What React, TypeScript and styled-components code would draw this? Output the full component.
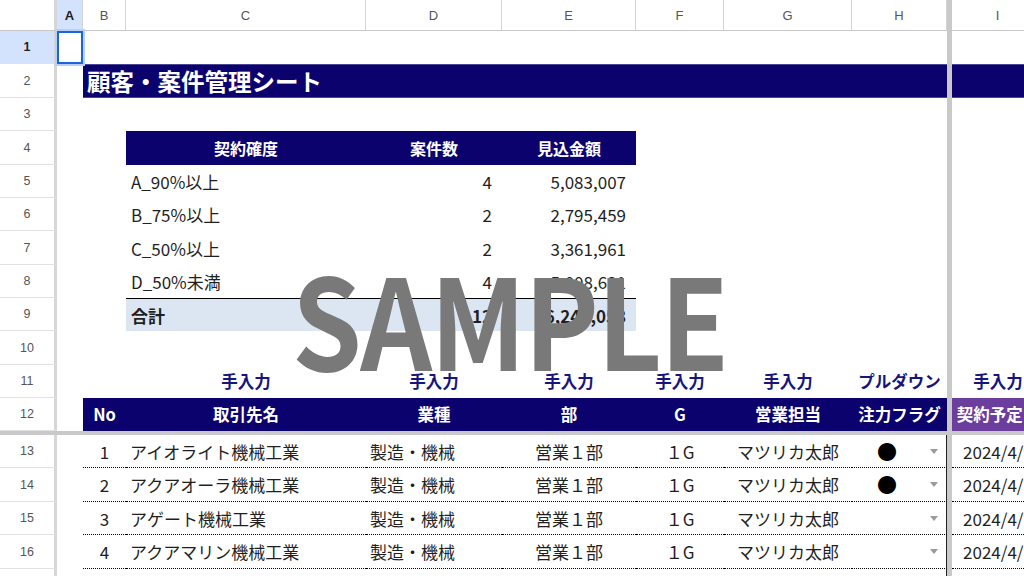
import styled, { createGlobalStyle } from 'styled-components'

const GlobalStyle = createGlobalStyle`
  html, body {
    margin: 0;
    padding: 0;
    background: #fff;
    overflow: hidden;
  }
`

const JP = `"Noto Sans CJK JP", "Noto Sans", sans-serif`
const NAVY = '#0b026e'
const PURPLE = '#6b3d9c'
const BAR = '#c9c9c9'

const Sheet = styled.div`
  position: relative;
  width: 1024px;
  height: 576px;
  overflow: hidden;
  font-family: ${JP};
  color: #1f1f1f;
`

// row header | A | B | C | D | E | F | G | H | freeze | I | J...
const Row = styled.div<{ $h: number }>`
  display: grid;
  grid-template-columns: 57px 26px 43px 240px 136px 134px 88px 128px 95px 5px 92px 1fr;
  height: ${p => p.$h}px;
`

const Corner = styled.div`
  border-right: 3px solid #d6d6d6;
  border-bottom: 1px solid #c7c7c7;
`

const ColHead = styled.div<{ $active?: boolean }>`
  display: flex;
  align-items: center;
  justify-content: center;
  border-right: 1px solid #d4d4d4;
  border-bottom: 1px solid #c7c7c7;
  font-family: "Liberation Sans", Arial, sans-serif;
  font-size: 13px;
  color: ${p => (p.$active ? '#1f1f1f' : '#555')};
  font-weight: ${p => (p.$active ? 700 : 400)};
  background: ${p => (p.$active ? '#d3e3fd' : '#fff')};
`

const RowHead = styled.div<{ $active?: boolean }>`
  display: flex;
  align-items: center;
  justify-content: center;
  border-right: 3px solid #d6d6d6;
  border-bottom: 1px solid #e1e1e1;
  font-family: "Liberation Sans", Arial, sans-serif;
  font-size: 12.5px;
  color: ${p => (p.$active ? '#1f1f1f' : '#555')};
  font-weight: ${p => (p.$active ? 700 : 400)};
  background: ${p => (p.$active ? '#d3e3fd' : '#fff')};
`

const Freeze = styled.div`
  background: ${BAR};
`

const FreezeRow = styled.div`
  height: 4px;
  background: ${BAR};
`

const Blank = styled.div``

const Selected = styled.div`
  position: relative;
  z-index: 1;
  border: 2px solid #1b64da;
  box-shadow: 0 0 0 2px #b8d0f8;
`

const Fill = styled.div<{ $bg: string }>`
  background: ${p => p.$bg};
  box-shadow: inset 0 1px 0 #4a4596, inset 0 -1px 0 #4a4596;
`

const TitleBar = styled.div`
  grid-column: span 7;
  display: flex;
  align-items: center;
  padding-left: 4px;
  background: ${NAVY};
  box-shadow: inset 0 1px 0 #4a4596, inset 0 -1px 0 #4a4596;
  color: #fff;
  font-size: 23.5px;
  font-weight: 700;
  white-space: nowrap;
`

const SumHead = styled.div`
  display: flex;
  align-items: center;
  justify-content: center;
  background: ${NAVY};
  color: #fff;
  font-size: 16px;
  font-weight: 700;
`

const SumCell = styled.div<{ $align?: 'left' | 'right'; $total?: boolean }>`
  display: flex;
  align-items: center;
  justify-content: ${p => (p.$align === 'right' ? 'flex-end' : 'flex-start')};
  padding: 0 10px 0 5px;
  font-size: 17px;
  font-weight: ${p => (p.$total ? 700 : 400)};
  background: ${p => (p.$total ? '#dce6f2' : 'transparent')};
  border-top: ${p => (p.$total ? '1px solid #000' : 'none')};
  white-space: nowrap;
`

const Tag = styled.div`
  display: flex;
  align-items: center;
  justify-content: center;
  padding-bottom: 2px;
  color: #17157d;
  font-size: 16.5px;
  font-weight: 700;
  white-space: nowrap;
  overflow: hidden;
`

const ListHead = styled.div<{ $bg?: string }>`
  display: flex;
  align-items: center;
  justify-content: center;
  padding-bottom: 1px;
  background: ${p => p.$bg ?? NAVY};
  color: #fff;
  font-size: 16.5px;
  font-weight: 700;
  white-space: nowrap;
  overflow: hidden;
`

const DataCell = styled.div<{ $align?: 'left' | 'center'; $edge?: boolean }>`
  display: flex;
  align-items: center;
  justify-content: ${p => (p.$align === 'left' ? 'flex-start' : 'center')};
  padding-left: ${p => (p.$align === 'left' ? '4px' : '0')};
  border-bottom: 1px dotted #000;
  border-right: ${p => (p.$edge ? '1px solid #222' : 'none')};
  font-size: 17px;
  white-space: nowrap;
  overflow: hidden;
`

const FlagCell = styled(DataCell)`
  display: grid;
  grid-template-columns: 1fr 24px;
  justify-items: center;
`

const Dot = styled.span`
  font-size: 20px;
  color: #000;
`

const Caret = styled.span`
  width: 0;
  height: 0;
  border-left: 4.5px solid transparent;
  border-right: 4.5px solid transparent;
  border-top: 5px solid #9a9a9a;
`

// watermark laid over the sheet, slightly condensed
const Stamp = styled.div`
  position: absolute;
  left: 292px;
  top: 253px;
  z-index: 5;
  font-family: "Noto Sans CJK JP", "Noto Sans", sans-serif;
  font-size: 126px;
  font-weight: 700;
  line-height: 1;
  letter-spacing: -2px;
  color: #797979;
  transform: scaleX(0.89);
  transform-origin: left center;
  pointer-events: none;
`

const HEIGHTS = [33, 34, 33, 34, 33, 33, 34, 33, 33, 34, 33, 33]

const summary = [
  ['A_90%以上', '4', '5,083,007'],
  ['B_75%以上', '2', '2,795,459'],
  ['C_50%以上', '2', '3,361,961'],
  ['D_50%未満', '4', '5,008,631'],
]

const deals = [
  { no: 1, name: 'アイオライト機械工業', flag: true },
  { no: 2, name: 'アクアオーラ機械工業', flag: true },
  { no: 3, name: 'アゲート機械工業', flag: false },
  { no: 4, name: 'アクアマリン機械工業', flag: false },
]

const tags = ['手入力', '手入力', '手入力', '手入力', '手入力', 'プルダウン']

export default function App() {
  return (
    <Sheet>
      <GlobalStyle />

      <Row $h={31}>
        <Corner />
        <ColHead $active>A</ColHead>
        {['B', 'C', 'D', 'E', 'F', 'G', 'H'].map(c => (
          <ColHead key={c}>{c}</ColHead>
        ))}
        <Freeze />
        <ColHead>I</ColHead>
        <ColHead />
      </Row>

      <Row $h={HEIGHTS[0]}>
        <RowHead $active>1</RowHead>
        <Selected />
        <Blank /><Blank /><Blank /><Blank /><Blank /><Blank /><Blank />
        <Freeze />
        <Blank />
      </Row>

      <Row $h={HEIGHTS[1]}>
        <RowHead>2</RowHead>
        <Blank />
        <TitleBar>顧客・案件管理シート</TitleBar>
        <Freeze />
        <Fill $bg={NAVY} />
        <Fill $bg={NAVY} />
      </Row>

      <Row $h={HEIGHTS[2]}>
        <RowHead>3</RowHead>
        <Blank /><Blank /><Blank /><Blank /><Blank /><Blank /><Blank /><Blank />
        <Freeze />
      </Row>

      <Row $h={HEIGHTS[3]}>
        <RowHead>4</RowHead>
        <Blank /><Blank />
        <SumHead>契約確度</SumHead>
        <SumHead>案件数</SumHead>
        <SumHead>見込金額</SumHead>
        <Blank /><Blank /><Blank />
        <Freeze />
      </Row>

      {summary.map(([label, count, amount], i) => (
        <Row key={label} $h={HEIGHTS[4 + i]}>
          <RowHead>{5 + i}</RowHead>
          <Blank /><Blank />
          <SumCell>{label}</SumCell>
          <SumCell $align="right">{count}</SumCell>
          <SumCell $align="right">{amount}</SumCell>
          <Blank /><Blank /><Blank />
          <Freeze />
        </Row>
      ))}

      <Row $h={HEIGHTS[8]}>
        <RowHead>9</RowHead>
        <Blank /><Blank />
        <SumCell $total>合計</SumCell>
        <SumCell $total $align="right">12</SumCell>
        <SumCell $total $align="right">16,249,058</SumCell>
        <Blank /><Blank /><Blank />
        <Freeze />
      </Row>

      <Row $h={HEIGHTS[9]}>
        <RowHead>10</RowHead>
        <Blank /><Blank /><Blank /><Blank /><Blank /><Blank /><Blank /><Blank />
        <Freeze />
      </Row>

      <Row $h={HEIGHTS[10]}>
        <RowHead>11</RowHead>
        <Blank /><Blank />
        {tags.map((t, i) => (
          <Tag key={i}>{t}</Tag>
        ))}
        <Freeze />
        <Tag>手入力</Tag>
      </Row>

      <Row $h={HEIGHTS[11]}>
        <RowHead>12</RowHead>
        <Blank />
        <ListHead>No</ListHead>
        <ListHead>取引先名</ListHead>
        <ListHead>業種</ListHead>
        <ListHead>部</ListHead>
        <ListHead>G</ListHead>
        <ListHead>営業担当</ListHead>
        <ListHead>注力フラグ</ListHead>
        <Freeze />
        <ListHead $bg={PURPLE}>契約予定日</ListHead>
        <ListHead $bg={PURPLE} />
      </Row>

      <FreezeRow />

      {deals.map((d, i) => {
        const h = i % 2 === 0 ? 33 : 34
        return (
          <Row key={d.no} $h={h}>
            <RowHead>{13 + i}</RowHead>
            <Blank />
            <DataCell>{d.no}</DataCell>
            <DataCell $align="left">{d.name}</DataCell>
            <DataCell $align="left">製造・機械</DataCell>
            <DataCell>営業１部</DataCell>
            <DataCell>１G</DataCell>
            <DataCell>マツリカ太郎</DataCell>
            <FlagCell $edge>
              <Dot>{d.flag ? '●' : ''}</Dot>
              <Caret />
            </FlagCell>
            <Freeze />
            <DataCell>2024/4/1</DataCell>
            <DataCell />
          </Row>
        )
      })}

      <Row $h={33}>
        <RowHead>17</RowHead>
        <Blank />
        <Blank /><Blank /><Blank /><Blank /><Blank /><Blank />
        <DataCell $edge />
        <Freeze />
        <Blank />
      </Row>

      <Stamp>SAMPLE</Stamp>
    </Sheet>
  )
}
